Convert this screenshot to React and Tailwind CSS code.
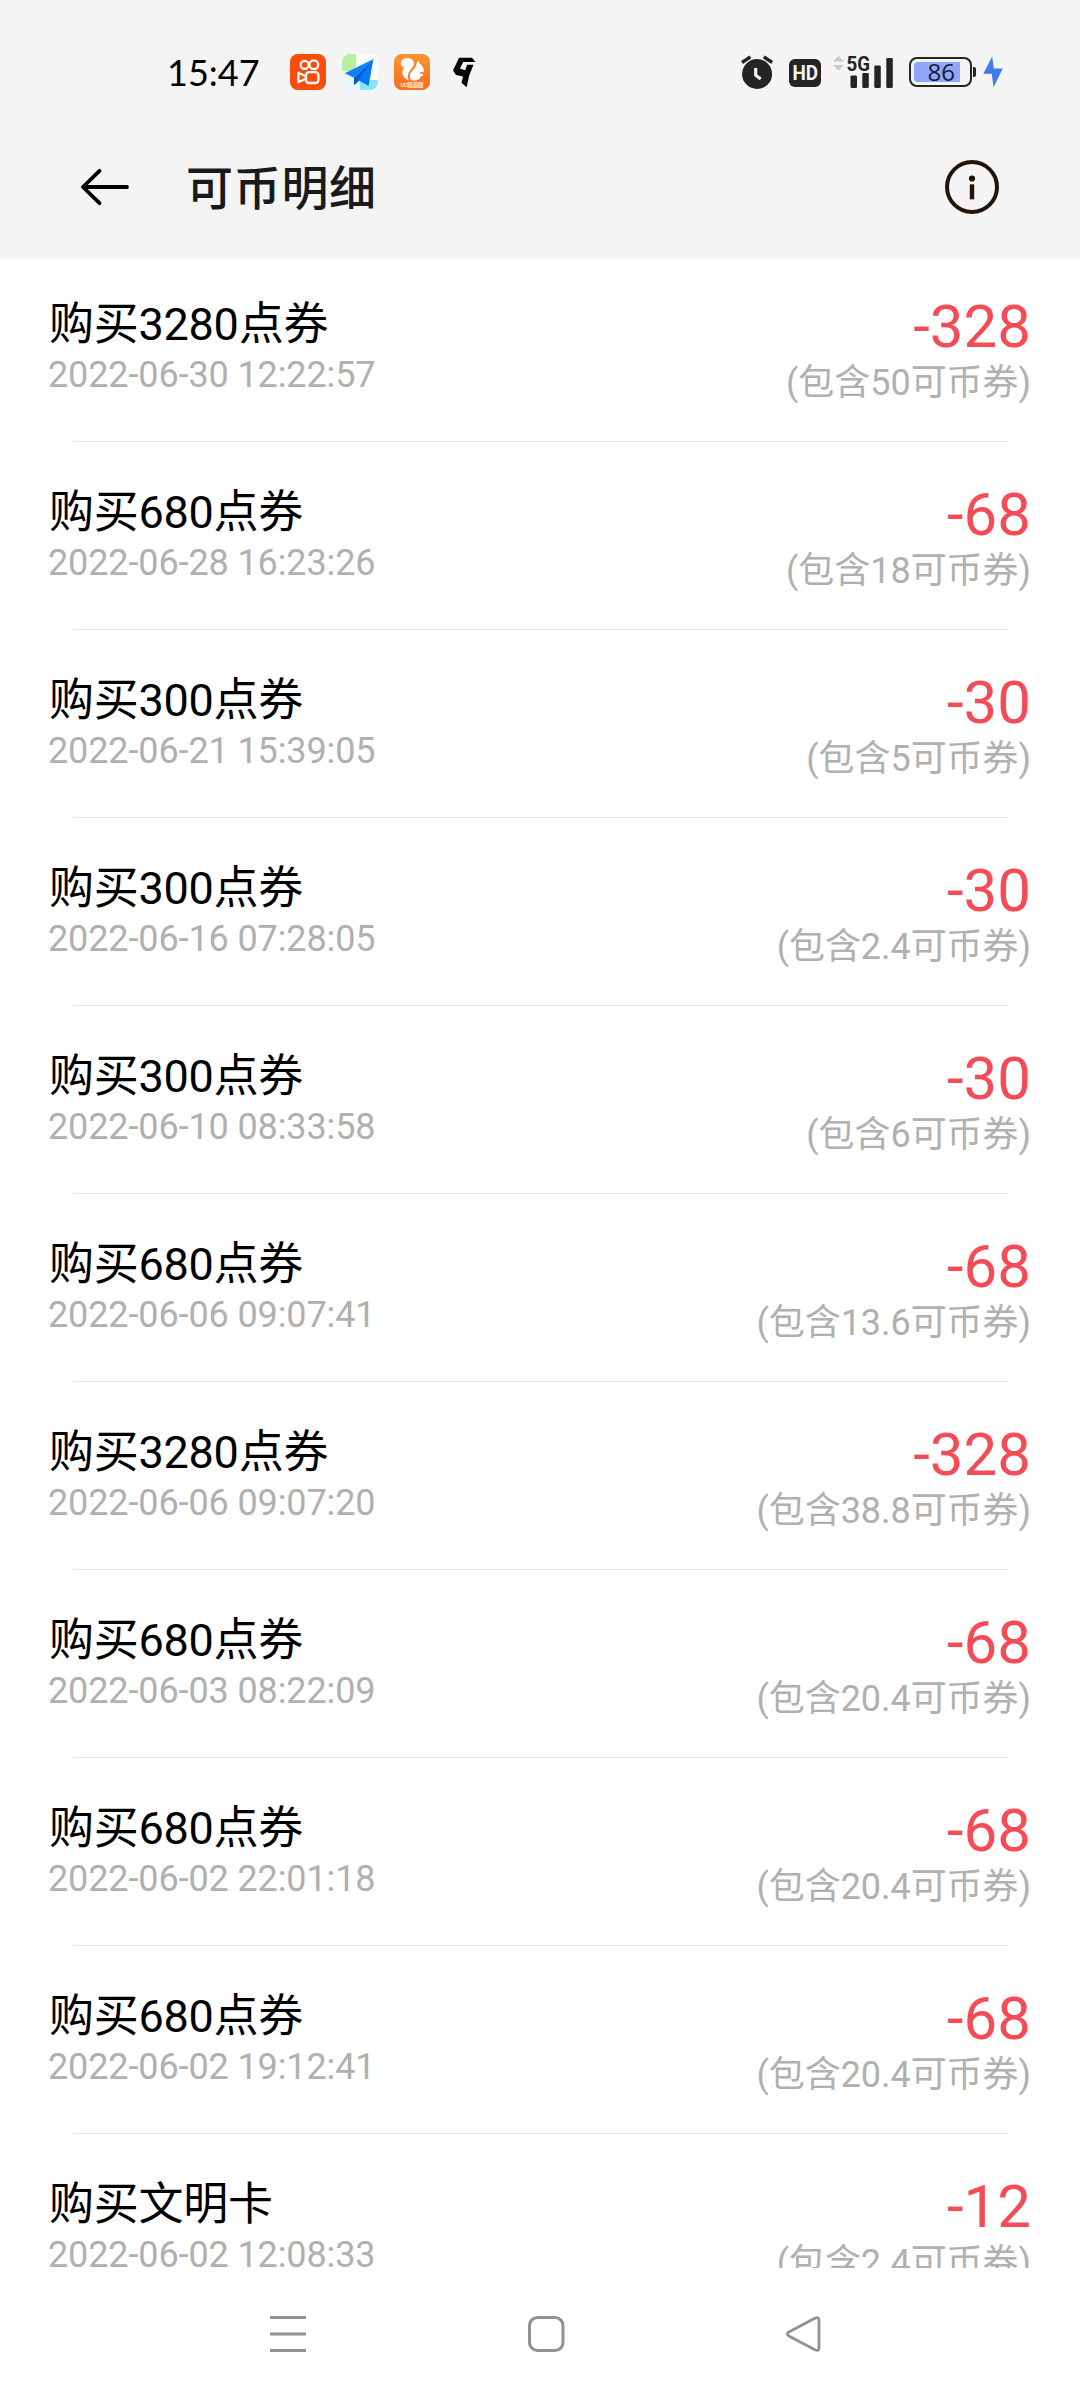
import React from 'react';

const records = [
  { title: '购买3280点券', time: '2022-06-30 12:22:57', amount: '-328', coupon: '50' },
  { title: '购买680点券', time: '2022-06-28 16:23:26', amount: '-68', coupon: '18' },
  { title: '购买300点券', time: '2022-06-21 15:39:05', amount: '-30', coupon: '5' },
  { title: '购买300点券', time: '2022-06-16 07:28:05', amount: '-30', coupon: '2.4' },
  { title: '购买300点券', time: '2022-06-10 08:33:58', amount: '-30', coupon: '6' },
  { title: '购买680点券', time: '2022-06-06 09:07:41', amount: '-68', coupon: '13.6' },
  { title: '购买3280点券', time: '2022-06-06 09:07:20', amount: '-328', coupon: '38.8' },
  { title: '购买680点券', time: '2022-06-03 08:22:09', amount: '-68', coupon: '20.4' },
  { title: '购买680点券', time: '2022-06-02 22:01:18', amount: '-68', coupon: '20.4' },
  { title: '购买680点券', time: '2022-06-02 19:12:41', amount: '-68', coupon: '20.4' },
  { title: '购买文明卡', time: '2022-06-02 12:08:33', amount: '-12', coupon: '2.4' },
];

// Notification icons on the left of the status bar
const VideoAppIcon = () => (
  <svg width="36" height="36" viewBox="0 0 36 36" fill="none">
    <rect width="36" height="36" rx="8" fill="#fc4c0b" />
    <g stroke="#fff" strokeWidth="2.3" strokeLinejoin="round">
      <circle cx="14.6" cy="10.8" r="4" />
      <circle cx="23.8" cy="10.8" r="4.4" />
      <rect x="16" y="18.2" width="12.4" height="10.8" rx="3" />
      <path d="M15.6 22.3 8.4 18.8v9.4l7.2-3.5" />
    </g>
  </svg>
);

const PlaneAppIcon = () => (
  <svg width="36" height="36" viewBox="0 0 36 36">
    <path d="M8 0h6v17H0V8a8 8 0 0 1 8-8z" fill="#b9f0a0" />
    <path d="M15 0h13a8 8 0 0 1 8 8v17H15z" fill="#f8fcfb" />
    <path d="M0 18h17v18H8a8 8 0 0 1-8-8z" fill="#eaf6fb" />
    <path d="M18 26h18v2a8 8 0 0 1-8 8H18z" fill="#8ce4fc" />
    <path d="M31.5 5 2.8 19.2l9.2 4.6z" fill="#0a83fb" />
    <path d="M31.5 5 12 23.8v7.4l5-4.5z" fill="#0758c8" />
    <path d="M31.5 5 16 26l10.5 6z" fill="#0879f6" />
  </svg>
);

const SquirrelAppIcon = () => (
  <svg width="36" height="36" viewBox="0 0 36 36">
    <defs>
      <linearGradient id="squirrelBg" x1="0" y1="0" x2="0" y2="1">
        <stop offset="0" stopColor="#f9942f" />
        <stop offset="1" stopColor="#f56f20" />
      </linearGradient>
    </defs>
    <rect width="36" height="36" rx="8" fill="url(#squirrelBg)" />
    <g fill="#fff">
      <path d="M13 4C8 4 6 8 7 11c.6 1.600 2 2 3.500 1.400C7 17 7.500 23 14.600 26.300c-1.500-4-.8-7 1.500-10S20 12 20 9.500C20 6 16.500 4 13 4z" />
      <path d="M24.200 6.500l1.300 3c2.500 1.500 4 4 4.500 6.500.3 1.600-.8 2.500-2.500 2.200l-2-.4C28 21 27 26 22 26.500h-4.500C15.300 24 15.300 20 17.800 17.500L21.400 13c1-2 1.300-4.500 2.800-6.500z" />
      <circle cx="27.800" cy="21" r="1.200" />
    </g>
    <text x="18" y="33.400" textAnchor="middle" fontSize="6" fontWeight="700" fill="#ffe9d6" fontFamily="Roboto, 'Noto Sans CJK SC', sans-serif" textLength="23">
      UC极速版
    </text>
  </svg>
);

const BoltAppIcon = () => (
  <svg width="24" height="32" viewBox="0 0 24 32">
    <path d="M7 1.800h13L23.500 6H11.300L7.800 12.600l5.400 1.600L15.200 8.800h6.300L17.200 19.500 14.600 31.200 9.500 26.700 11 20.600 4 19 1 14.500z" fill="#050505" />
  </svg>
);

// System icons on the right of the status bar
const AlarmIcon = () => (
  <svg width="34" height="36" viewBox="0 0 34 36" fill="none">
    <circle cx="17.100" cy="20" r="15" fill="#242424" />
    <path d="M2 8.500 10.400 2.800M23.800 2.800 32.200 8.500" stroke="#242424" strokeWidth="3.400" />
    <path d="M15.700 14v7.200l5 3.800" stroke="#f4f4f4" strokeWidth="3.200" />
  </svg>
);

const SignalIcon = () => (
  <svg className="overflow-visible" width="62" height="34" viewBox="0 0 62 34">
    <path d="M5.500 1l5.500 5.500H0zM5.500 15.500 0 10h11z" fill="#c9c9c9" />
    <text x="13.500" y="15.800" fontSize="21" fontWeight="700" fill="#242424" fontFamily="Roboto, sans-serif" textLength="23.500" lengthAdjust="spacingAndGlyphs">
      5G
    </text>
    <g fill="#242424">
      <rect x="17.500" y="20.500" width="6.500" height="12.500" rx="1.200" />
      <rect x="29.300" y="18" width="6.500" height="15" rx="1.200" />
      <rect x="41.300" y="10.500" width="6.500" height="22.500" rx="1.200" />
      <rect x="53.300" y="3" width="6.500" height="30" rx="1.200" />
    </g>
  </svg>
);

const Battery = ({ level }) => (
  <div className="flex items-center">
    <div className="flex h-[30px] w-[63px] rounded-[8px] border-2 border-[#242424] p-[3px]">
      <div className="flex h-[20px] w-[46px] items-center justify-end rounded-l-[4px] bg-[#91a6f8]">
        <span className="mr-[5px] font-['Open_Sans',sans-serif] text-[24px] leading-[20px] font-medium text-[#141c38]">{level}</span>
      </div>
    </div>
    <div className="ml-px h-[10px] w-[3px] rounded-r-[2px] bg-[#242424]" />
    <svg className="ml-[7px]" width="20" height="32" viewBox="0 0 20 32">
      <path d="M9.200.5.300 17.800h8.500l1.700 13.700L19.700 12.400h-8.900z" fill="#4379ef" />
    </svg>
  </div>
);

const StatusBar = () => (
  <div className="flex h-[115px] items-center justify-between pt-[29px] pr-[77px] pl-[167px]">
    <div className="flex items-center">
      <span className="w-[123px] font-['Lato',sans-serif] text-[36px] leading-[40px] text-black">15:47</span>
      <div className="flex items-center gap-4">
        <VideoAppIcon />
        <PlaneAppIcon />
        <SquirrelAppIcon />
      </div>
      <div className="ml-[22px]">
        <BoltAppIcon />
      </div>
    </div>
    <div className="flex items-center">
      <AlarmIcon />
      <div className="mt-[2px] ml-[15px] flex h-[28px] w-[32px] items-center justify-center rounded-[6px] bg-[#242424]">
        <span className="scale-x-[0.9] font-['Roboto',sans-serif] text-[21px] leading-none font-bold text-[#f4f4f4]">HD</span>
      </div>
      <div className="ml-[12px]">
        <SignalIcon />
      </div>
      <div className="ml-[14px]">
        <Battery level={86} />
      </div>
    </div>
  </div>
);

const TitleBar = () => (
  <div className="flex h-[144px] items-center justify-between pr-[80px] pl-[80px]">
    <div className="flex items-center">
      <svg width="50" height="40" viewBox="0 0 50 40" fill="none" stroke="#000" strokeWidth="3.800" strokeLinecap="round" strokeLinejoin="round">
        <path d="M47 20H3M19.500 3.800 3 20l16.500 16.200" />
      </svg>
      <h1 className="mt-[4px] ml-[56px] font-['Roboto','Noto_Sans_CJK_SC',sans-serif] text-[47px] leading-[60px] font-medium tracking-[0.7px] text-[#1a1a1a]">可币明细</h1>
    </div>
    <svg width="56" height="56" viewBox="0 0 56 56">
      <circle cx="28" cy="28" r="25" fill="none" stroke="#22140a" strokeWidth="4" />
      <circle cx="28" cy="19.500" r="3.100" fill="#22140a" />
      <rect x="25.800" y="25.300" width="4.400" height="15" fill="#22140a" />
    </svg>
  </div>
);

const RecordRow = ({ record }) => (
  <li className="mb-[37px]">
    <div className="flex h-[150px] justify-between px-12 whitespace-nowrap">
      <div className="pt-[7px]">
        <p className="pl-px text-[45px] leading-[53px] tracking-[-0.25px] text-black">{record.title}</p>
        <p className="mt-[3px] text-[36px] leading-[42px] tracking-[-0.11px] text-[#b0b0b0]">{record.time}</p>
      </div>
      <div className="text-right">
        <p className="pr-px text-[60px] leading-[71px] text-[#f54b56]">{record.amount}</p>
        <p className="pr-px text-[36px] leading-[43px] tracking-[-0.05px] text-[#b0b0b0]">(包含{record.coupon}可币券)</p>
      </div>
    </div>
    <div className="mr-[72px] ml-[73px] h-px bg-[#e8e8e8]" />
  </li>
);

const NavBar = () => (
  <div className="flex h-[132px] items-start pt-[47px] pl-[269px] text-[#929292]">
    <svg width="38" height="38" viewBox="0 0 38 38" stroke="currentColor" strokeWidth="3">
      <path d="M1 2.500h36M1 19h36M1 35.500h36" />
    </svg>
    <svg className="ml-[220px]" width="38" height="38" viewBox="0 0 38 38" fill="none" stroke="currentColor" strokeWidth="3">
      <rect x="2.500" y="2.500" width="33.500" height="33" rx="8" />
    </svg>
    <svg className="ml-[220px]" width="38" height="38" viewBox="0 0 38 38" fill="none" stroke="currentColor" strokeWidth="2.800" strokeLinejoin="round">
      <path d="M3.400 17.200 29.800 3.300q4.200-2 4.200 2V32.700q0 4-4.200 2L3.400 20.800q-2-1.800 0-3.600z" />
    </svg>
  </div>
);

const App = () => {
  return (
    <div className="flex h-[2400px] w-[1080px] flex-col overflow-hidden bg-white">
      <header className="h-[259px] shrink-0 bg-[#f4f4f4]">
        <StatusBar />
        <TitleBar />
      </header>

      <ul className="h-[2009px] shrink-0 overflow-hidden pt-[32px] font-['Roboto','Noto_Sans_CJK_SC',sans-serif]">
        {records.map((record) => (
          <RecordRow key={record.time} record={record} />
        ))}
      </ul>

      <NavBar />
    </div>
  );
};

export default App;
